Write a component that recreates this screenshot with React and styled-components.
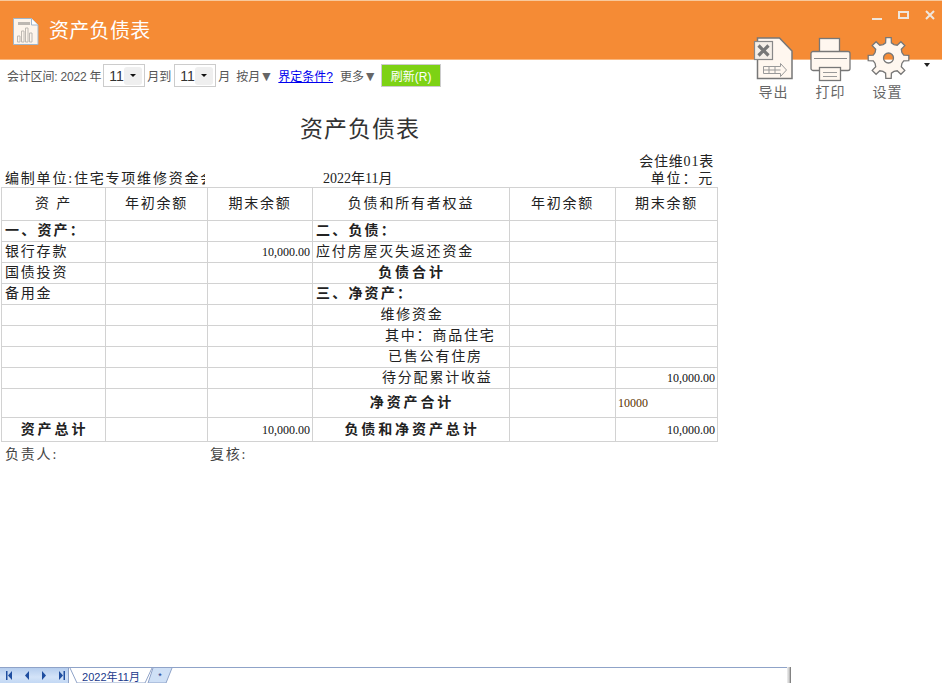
import styled, { createGlobalStyle } from "styled-components"

const GlobalStyle = createGlobalStyle`
  html, body { margin: 0; padding: 0; background: #fff; overflow: hidden; }
  * { box-sizing: border-box; }
`
const reportFont = `"Liberation Serif", "Noto Sans CJK SC", serif`
const uiFont = `"Liberation Sans", "Noto Sans CJK SC", sans-serif`

const Page = styled.div`
  position: relative;
  height: 683px;
  display: flex;
  flex-direction: column;
  font-family: ${uiFont};
`
const Header = styled.header`
  height: 60px;
  flex: none;
  display: flex;
  align-items: center;
  gap: 10px;
  padding: 2px 0 0 13px;
  background: #f58b35;
  border-top: 1px solid #f8c99c;
  border-bottom: 1px solid #f9b77f;
`
const HeaderTitle = styled.h1`
  margin: 0;
  font-size: 20px;
  font-weight: 400;
  line-height: 26px;
  color: #fff;
  letter-spacing: 0.3px;
`
const WindowButtons = styled.div`
  position: absolute;
  top: 10px;
  left: 870px;
  display: flex;
  gap: 16px;
  align-items: center;
`
const ActionBar = styled.div`
  position: absolute;
  top: 36px;
  left: 745px;
  display: flex;
  align-items: flex-start;
`
const Action = styled.div`
  width: 57px;
  display: flex;
  flex-direction: column;
  align-items: center;
  font-size: 14px;
  line-height: 20px;
  color: #666;
  letter-spacing: 1px;
`
const ActionIcon = styled.svg`
  display: block;
  width: 44px;
  height: 46px;
`
const MoreCaret = styled.span`
  width: 0;
  height: 0;
  margin: 27px 0 0 8px;
  border-left: 3.5px solid transparent;
  border-right: 3.5px solid transparent;
  border-top: 4px solid #222;
`
const Filters = styled.div`
  height: 30px;
  flex: none;
  display: flex;
  align-items: center;
  padding: 1px 0 0 7px;
  font-size: 12px;
  color: #555;
`
const FilterText = styled.span`
  display: inline-flex;
  align-items: center;
  margin-right: ${(p) => p.$gap ?? 2}px;
  letter-spacing: ${(p) => (p.$tight ? "-0.2px" : "0")};
  white-space: pre;
`
const DownMark = styled.span`
  width: 10px;
  margin-left: 1px;
  display: inline-flex;
  justify-content: center;
  overflow: visible;
  font-size: 14px;
  line-height: 12px;
  color: #666;
`
const FilterLink = styled.a`
  margin-right: 7px;
  color: #0000ee;
  text-decoration: underline;
  white-space: nowrap;
`
const MonthSelect = styled.div`
  width: 42px;
  height: 23px;
  margin-right: 2px;
  padding: 2px 2px 2px 5px;
  display: flex;
  align-items: center;
  justify-content: space-between;
  border: 1px solid #ccc;
  font-size: 14px;
  color: #333;
`
const SelectArrow = styled.span`
  width: 18px;
  height: 18px;
  display: flex;
  align-items: center;
  justify-content: center;
  background: #efefef;
  border-radius: 3px;
  &::after {
    content: "";
    border-left: 3px solid transparent;
    border-right: 3px solid transparent;
    border-top: 3px solid #111;
  }
`
const RefreshButton = styled.button`
  width: 60px;
  height: 23px;
  padding: 0;
  border: 1px solid #ccc;
  background: #7dd214;
  color: #fff;
  font-family: ${uiFont};
  font-size: 12px;
`
const Report = styled.main`
  width: 718px;
  flex: 1;
  font-family: ${reportFont};
  font-size: 14px;
  color: #222;
  letter-spacing: 1.8px;
`
const ReportTitle = styled.h2`
  margin: 19px 0 0;
  height: 42px;
  padding-left: 2px;
  font-size: 23px;
  line-height: 42px;
  font-weight: 400;
  text-align: center;
  letter-spacing: 1px;
  color: #333;
`
const MetaRow = styled.div`
  height: 36px;
  display: grid;
  grid-template-columns: 200px 1fr auto;
  align-items: end;
  line-height: 17px;
  padding-left: 5px;
  padding-right: 4px;
`
const MetaClip = styled.div`
  overflow: hidden;
  white-space: nowrap;
`
const MetaDate = styled.div`
  padding-left: 118px;
  letter-spacing: 0;
`
const MetaRight = styled.div`
  text-align: right;
  letter-spacing: 0.8px;
`
const MetaUnit = styled.div`
  letter-spacing: 1.8px;
`
const Sheet = styled.table`
  width: 717px;
  margin-left: 1px;
  table-layout: fixed;
  border-collapse: collapse;
  line-height: 16px;
`
const Row = styled.tr`
  height: ${(p) => p.$h ?? 21}px;
`
const Cell = styled.td`
  padding: 0 1px 0 ${(p) => p.$indent ?? 3}px;
  border: 1px solid #d2d2d2;
  white-space: nowrap;
  overflow: hidden;
  font-weight: ${(p) => (p.$bold ? 700 : 400)};
  letter-spacing: ${(p) => (!p.$bold ? "1.8px" : p.$align === "center" ? "2.9px" : "2.2px")};
  text-align: ${(p) => p.$align ?? "left"};
`
const HeadCell = styled(Cell).attrs({ as: "th" })`
  font-weight: 400;
  text-align: center;
  padding: 0;
`
const Amount = styled(Cell)`
  padding: 0 2px;
  font-size: 12px;
  letter-spacing: 0;
  text-align: right;
  color: #111;
`
const RawAmount = styled(Amount)`
  text-align: left;
  color: #5a3000;
`
const Signoff = styled.div`
  display: grid;
  grid-template-columns: 205px 1fr;
  padding: 4px 0 0 5px;
  line-height: 17px;
  color: #444;
`
const TabBar = styled.footer`
  width: 789px;
  height: 16px;
  flex: none;
  display: flex;
  border-top: 1px solid #8fa3c8;
  position: relative;
`
const TabEdge = styled.span`
  position: absolute;
  top: -1px;
  right: -2px;
  width: 4px;
  height: 16px;
  background: linear-gradient(90deg, #eee, #ccc 55%, #666);
`
const TabNav = styled.div`
  width: 69px;
  display: flex;
  align-items: center;
  justify-content: space-between;
  padding: 0 3px 0 6px;
  background: linear-gradient(180deg, #b5cdee, #d3e3f8 60%, #c3d8f4);
  border-right: 1px solid #8fa3c8;
`
const Tab = styled.div`
  position: relative;
  width: ${(p) => p.$w}px;
  margin-left: ${(p) => p.$offset ?? 0}px;
  display: flex;
  align-items: center;
  justify-content: center;
  font-size: ${(p) => p.$size ?? 11}px;
  color: #1a3a8c;
`
const TabShape = styled.svg`
  position: absolute;
  inset: 0;
  width: 100%;
  height: 100%;
`
const TabLabel = styled.span`
  position: relative;
`

const gearPath = (() => {
  const cx = 22.5
  const cy = 22
  const teeth = 8
  let d = ""
  for (let i = 0; i < teeth; i++) {
    const a = (i * 2 * Math.PI) / teeth - Math.PI / 2
    const step = (2 * Math.PI) / teeth
    const pts = [
      [14.5, a - step * 0.5],
      [15.5, a - step * 0.24],
      [20.5, a - step * 0.17],
      [20.5, a + step * 0.17],
      [15.5, a + step * 0.24],
    ]
    pts.forEach(([r, t]) => {
      d += `${d ? "L" : "M"}${(cx + r * Math.cos(t)).toFixed(1)} ${(cy + r * Math.sin(t)).toFixed(1)}`
    })
  }
  // hole is cut out so the header edge shows through it
  return `${d}Z M${cx - 5} ${cy}a5 5 0 1 0 10 0a5 5 0 1 0-10 0Z`
})()

const ReportIcon = () => (
  <svg width="26" height="27" viewBox="0 0 26 27">
    <path d="M.5.5h18l6.500 6.500v19.500H.5z" fill="#fdf5ec" stroke="#9fb6cc" />
    <path d="M18.500.5v6.500h6.500" fill="#fff" stroke="#9fb6cc" />
    <rect x="5" y="4" width="12" height="3" fill="#bdb8b2" />
    <path d="M4.500 24v-6h2.500v6zM8.500 24V13h2.500v11zM12.500 24V10h2.500v14zM16.500 24v-9h2.500v9z" fill="none" stroke="#bdb8b2" />
  </svg>
)

const ExportIcon = () => (
  <ActionIcon viewBox="0 0 44 46">
    <path d="M5.500 2h22l12.500 13v27.500H5.500z" fill="#fff7ef" stroke="#777" strokeWidth="1.500" />
    <rect x="2.500" y="5.500" width="18" height="18" fill="#f5efe8" stroke="#888" strokeWidth="1.200" />
    <path d="M6.500 9.500l10 10M16.500 9.500l-10 10" stroke="#777" strokeWidth="3.200" />
    <path d="M11.500 30.500h17v-3l6 6.500-6 6.500v-3h-17zM17 30.500v7M23 30.500v7M11.500 34h17" fill="none" stroke="#999" />
  </ActionIcon>
)

const PrintIcon = () => (
  <ActionIcon viewBox="0 0 44 46">
    <rect x="10.500" y="2.500" width="20" height="14" fill="#fff7ef" stroke="#777" strokeWidth="1.300" />
    <path d="M4 15.500h35a2 2 0 0 1 2 2v15a2 2 0 0 1-2 2H4a2 2 0 0 1-2-2v-15a2 2 0 0 1 2-2z" fill="#fff7ef" stroke="#777" strokeWidth="1.300" />
    <path d="M5 22.500h33" stroke="#888" />
    <rect x="10.500" y="31.500" width="21" height="13" fill="#fff7ef" stroke="#777" strokeWidth="1.300" />
    <path d="M14 36.500h14M14 40.500h14" stroke="#999" />
  </ActionIcon>
)

const GearIcon = () => (
  <ActionIcon viewBox="0 0 44 46">
    <path d={gearPath} fill="#fff7ef" fillRule="evenodd" stroke="#777" strokeWidth="1.300" />
  </ActionIcon>
)

const NavGlyph = ({ flip, bar }) => (
  <svg width="7" height="9" viewBox="0 0 7 9" style={flip ? { transform: "scaleX(-1)" } : undefined}>
    {bar && <rect x="0" y="0" width="1.500" height="9" fill="#1f4ea0" />}
    <path d="M6 0v9L2 4.500z" fill="#1f4ea0" />
  </svg>
)

const rows = [
  { left: "一、资产：", leftBold: true, right: "二、负债：", rightBold: true },
  { left: "银行存款", end: "10,000.00", right: "应付房屋灭失返还资金" },
  { left: "国债投资", right: "负债合计", rightBold: true, rightAlign: "center" },
  { left: "备用金", right: "三、净资产：", rightBold: true },
  { right: "维修资金", rightAlign: "center" },
  { right: "其中：商品住宅", indent: 72 },
  { right: "已售公有住房", indent: 75 },
  { right: "待分配累计收益", indent: 69, rightEnd: "10,000.00" },
]

const App = () => {
  return (
    <Page>
      <GlobalStyle />
      <Header>
        <ReportIcon />
        <HeaderTitle>资产负债表</HeaderTitle>
      </Header>
      <WindowButtons>
        <svg width="12" height="10" viewBox="0 0 12 10"><rect x="2" y="8" width="10" height="2" fill="#efe6dc" /></svg>
        <svg width="11" height="8" viewBox="0 0 11 8"><rect x="1" y="1" width="9" height="6" fill="none" stroke="#efe6dc" strokeWidth="2" /></svg>
        <svg width="10" height="10" viewBox="0 0 10 10"><path d="M1 1l8 8M9 1L1 9" stroke="#efe6dc" strokeWidth="2" /></svg>
      </WindowButtons>
      <ActionBar>
        <Action><ExportIcon />导出</Action>
        <Action><PrintIcon />打印</Action>
        <Action><GearIcon />设置</Action>
        <MoreCaret />
      </ActionBar>
      <Filters>
        <FilterText $tight>会计区间: 2022 年</FilterText>
        <MonthSelect>11<SelectArrow /></MonthSelect>
        <FilterText $gap={3}>月到</FilterText>
        <MonthSelect>11<SelectArrow /></MonthSelect>
        <FilterText $gap={6}>月</FilterText>
        <FilterText $gap={7}>按月<DownMark>▼</DownMark></FilterText>
        <FilterLink href="#">界定条件?</FilterLink>
        <FilterText $gap={6}>更多<DownMark>▼</DownMark></FilterText>
        <RefreshButton>刷新(R)</RefreshButton>
      </Filters>
      <Report>
        <ReportTitle>资产负债表</ReportTitle>
        <MetaRow>
          <MetaClip>编制单位:住宅专项维修资金会计核算</MetaClip>
          <MetaDate>2022年11月</MetaDate>
          <MetaRight>
            会住维01表
            <MetaUnit>单位：元</MetaUnit>
          </MetaRight>
        </MetaRow>
        <Sheet>
          <colgroup>
            <col width="104" />
            <col width="102" />
            <col width="105" />
            <col width="197" />
            <col width="106" />
            <col width="102" />
          </colgroup>
          <thead>
            <Row $h={33}>
              <HeadCell>资 产</HeadCell>
              <HeadCell>年初余额</HeadCell>
              <HeadCell>期末余额</HeadCell>
              <HeadCell>负债和所有者权益</HeadCell>
              <HeadCell>年初余额</HeadCell>
              <HeadCell>期末余额</HeadCell>
            </Row>
          </thead>
          <tbody>
            {rows.map((r, i) => (
              <Row key={i}>
                <Cell $bold={r.leftBold}>{r.left}</Cell>
                <Cell />
                <Amount>{r.end}</Amount>
                <Cell $bold={r.rightBold} $align={r.rightAlign} $indent={r.indent}>{r.right}</Cell>
                <Cell />
                <Amount>{r.rightEnd}</Amount>
              </Row>
            ))}
            <Row $h={29}>
              <Cell />
              <Cell />
              <Cell />
              <Cell $bold $align="center">净资产合计</Cell>
              <Cell />
              <RawAmount>10000</RawAmount>
            </Row>
            <Row $h={24}>
              <Cell $bold $align="center">资产总计</Cell>
              <Cell />
              <Amount>10,000.00</Amount>
              <Cell $bold $align="center">负债和净资产总计</Cell>
              <Cell />
              <Amount>10,000.00</Amount>
            </Row>
          </tbody>
        </Sheet>
        <Signoff>
          <span>负责人:</span>
          <span>复核:</span>
        </Signoff>
      </Report>
      <TabBar>
        <TabNav>
          <NavGlyph bar />
          <NavGlyph />
          <NavGlyph flip />
          <NavGlyph flip bar />
        </TabNav>
        <Tab $w={84}>
          <TabShape viewBox="0 0 84 15" preserveAspectRatio="none">
            <path d="M1 0L8 15H76L83 0" fill="#fff" stroke="#8fa3c8" />
          </TabShape>
          <TabLabel>2022年11月</TabLabel>
        </Tab>
        <Tab $w={26} $offset={-6} $size={9}>
          <TabShape viewBox="0 0 26 15" preserveAspectRatio="none">
            <path d="M6 0L1 15H19L25 0" fill="#cfe0f6" stroke="#8fa3c8" />
          </TabShape>
          <TabLabel>*</TabLabel>
        </Tab>
        <TabEdge />
      </TabBar>
    </Page>
  )
}

export default App
